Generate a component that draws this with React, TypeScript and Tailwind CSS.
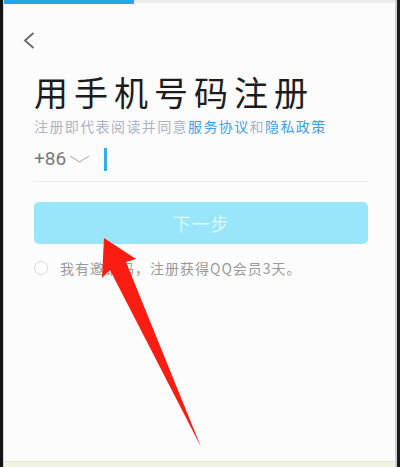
import React from "react";

const cjk = { fontFamily: '"Noto Sans CJK SC", "Noto Sans", sans-serif' };

export default function App() {
  return (
    <div className="relative flex h-[467px] w-[400px] overflow-hidden bg-[#fdfcfd]">
      {/* video frame edge, left */}
      <div className="w-[3px] bg-[#141414]" />
      <div className="w-[1px] bg-[#d4d4d4]" />

      <div className="flex flex-1 flex-col">
        {/* progress bar */}
        <div className="flex h-[4px]">
          <div className="w-[130px] bg-[#22a8e9]" />
          <div className="h-[3px] flex-1 bg-[#ececec]" />
        </div>

        {/* back */}
        <div className="mt-[28px] pl-[19px]">
          <svg width="12" height="17" viewBox="0 0 12 17" fill="none">
            <path d="M10.5 1 L2 8.5 L10.5 16" stroke="#6a6a6a" strokeWidth="1.9" />
          </svg>
        </div>

        <div className="flex flex-col pl-[30px] pr-[27px]" style={cjk}>
          {/* title */}
          <h1 className="mt-[23px] text-[34px] font-normal leading-[40px] tracking-[6px] text-[#1c1c1c]">
            用手机号码注册
          </h1>
          <p className="mt-[4px] text-[14px] leading-[20px] tracking-[1.4px] text-[#a9b5c6]">
            注册即代表阅读并同意
            <span className="text-[#3f9fe6]">服务协议</span>和
            <span className="text-[#3f9fe6]">隐私政策</span>
          </p>

          {/* phone input */}
          <div className="mt-[10px] flex h-[36px] items-start border-b border-[#ececec] pt-[1px]">
            <div className="flex h-[24px] items-center">
              <span
                className="text-[19px] leading-[24px] text-[#7a7a7a]"
                style={{ fontFamily: "Roboto, sans-serif" }}
              >
                +86
              </span>
              <svg className="ml-[3px]" width="21" height="8" viewBox="0 0 21 8" fill="none">
                <path d="M1 1 L10.5 7 L20 1" stroke="#bdbdbd" strokeWidth="1.4" />
              </svg>
              <div className="ml-[14px] h-[23px] w-[2.5px] bg-[#2cb0e6]" />
            </div>
          </div>

          {/* next */}
          <button className="mt-[20px] flex h-[42px] items-center justify-center rounded-[5px] bg-[#99e6fb] text-[18px] tracking-[1px] text-[#dff7fe]">
            下一步
          </button>

          {/* invite */}
          <label className="mt-[14px] flex h-[20px] items-center">
            <span className="h-[14px] w-[14px] rounded-full border border-[#d9d9d9] bg-white" />
            <span className="ml-[12px] text-[14px] tracking-[1px] text-[#9a9a9a]">
              我有邀请码，注册获得QQ会员3天。
            </span>
          </label>
        </div>

        <div className="flex-1" />
        {/* bottom strip of the video frame */}
        <div className="h-[6px] border-t border-[#e3e8cf] bg-[#f1f4e2]" />
      </div>

      {/* video frame edge, right */}
      <div className="w-[2px] bg-[#cfcfcf]" />
      <div className="w-[3px] bg-[#1a1a1a]" />

      {/* red annotation arrow */}
      <svg
        className="pointer-events-none absolute left-0 top-0"
        width="400"
        height="467"
        viewBox="0 0 400 467"
      >
        <polygon
          points="104,238 136,259 126,262 201,447 110,270 102,278"
          fill="#fb1c12"
        />
      </svg>
    </div>
  );
}
